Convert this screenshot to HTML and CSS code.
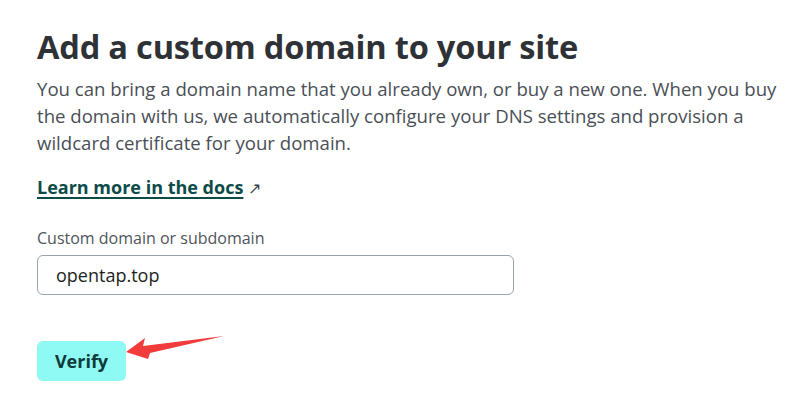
FILE: index.html
```html
<!DOCTYPE html>
<html lang="en">
<head>
<meta charset="utf-8">
<title>Add a custom domain</title>
<link rel="stylesheet" href="styles.css">
</head>
<body>
<main class="page">
  <h1 class="title">Add a custom domain to your site</h1>
  <p class="lead">You can bring a domain name that you already own, or buy a new one. When you buy the domain with us, we automatically configure your DNS settings and provision a wildcard certificate for your domain.</p>
  <p class="docs"><a class="docs-link" href="#">Learn more in the docs</a> <span class="ext">↗</span></p>
  <label class="field">
    <span class="field-label">Custom domain or subdomain</span>
    <input class="field-input" type="text" value="opentap.top">
  </label>
  <div class="actions">
    <button class="btn-verify" type="button">Verify</button>
  </div>
  <svg class="annot" width="808" height="413" viewBox="0 0 808 413" aria-hidden="true">
    <polygon points="126,352 145,338 143,346 224,336 150,353 148,359" fill="#f23b3b"/>
  </svg>
</main>
</body>
</html>
```
FILE: styles.css
```css
html, body {
  margin: 0;
  padding: 0;
  background: #ffffff;
}
body {
  font-family: "Open Sans", "Noto Sans", sans-serif;
  color: #474c53;
}
.page {
  position: relative;
  width: 808px;
  height: 413px;
  box-sizing: border-box;
  padding: 25px 0 0 37px;
  overflow: hidden;
}
.title {
  margin: 0;
  font-size: 32.6px;
  line-height: 44px;
  font-weight: 700;
  color: #2e3236;
  letter-spacing: -0.2px;
}
.lead {
  margin: 6px 0 0 0;
  width: 750px;
  font-size: 18.6px;
  line-height: 27px;
  color: #4a4f56;
}
.docs {
  margin: 19px 0 0 0;
  font-size: 18px;
  line-height: 24px;
}
.docs-link {
  color: #0d4b48;
  font-weight: 700;
  text-decoration: underline;
  text-underline-offset: 3px;
  text-decoration-thickness: 1.5px;
}
.ext {
  color: #3b4046;
  font-size: 16px;
}
.field {
  display: flex;
  flex-direction: column;
  margin-top: 27px;
  width: 477px;
}
.field-label {
  font-size: 16px;
  line-height: 22px;
  color: #4f545b;
  margin-bottom: 6px;
}
.field-input {
  box-sizing: border-box;
  height: 40px;
  width: 477px;
  border: 1px solid #9aa2ab;
  border-radius: 6px;
  padding: 0 18px;
  font-family: inherit;
  font-size: 18px;
  color: #1c1e21;
  background: #fff;
  outline: none;
}
.actions {
  margin-top: 46px;
}
.btn-verify {
  box-sizing: border-box;
  width: 89px;
  height: 40px;
  border: none;
  border-radius: 6px;
  background: #8ffaf3;
  color: #0d3b3a;
  font-family: inherit;
  font-weight: 700;
  font-size: 18px;
  padding: 0;
}
.annot {
  position: absolute;
  left: 0;
  top: 0;
  pointer-events: none;
}
```
